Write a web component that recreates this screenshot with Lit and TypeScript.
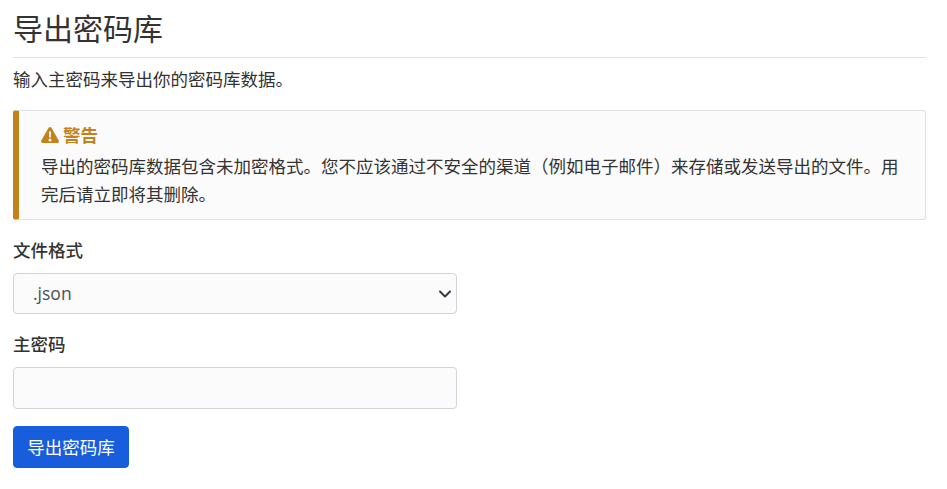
import { LitElement, html, css } from "lit";
import { customElement } from "lit/decorators.js";

@customElement("app-root")
export class AppRoot extends LitElement {
  static styles = css`
    :host {
      display: block;
      box-sizing: border-box;
      width: 926px;
      padding: 0 0 21px 13px;
      background: #fff;
      color: #333;
      font-family: "Open Sans", "Noto Sans CJK SC", sans-serif;
      font-size: 17.5px;
      line-height: 24px;
    }
    .head {
      height: 57px;
      border-bottom: 1px solid #dee2e6;
      display: flex;
      align-items: flex-end;
    }
    h1 {
      margin: 0 0 7px;
      font-size: 30px;
      font-weight: 400;
      line-height: 42px;
    }
    .intro {
      margin: 8px 0 17px;
      height: 27px;
      line-height: 27px;
    }
    .alert {
      box-sizing: border-box;
      height: 110px;
      margin-bottom: 18px;
      padding: 12px 22px 0 22px;
      border: 1px solid #dee2e6;
      border-left: 6px solid #c3821a;
      border-radius: 3px;
      background: #fbfbfb;
    }
    .alert-title {
      display: flex;
      align-items: center;
      gap: 4px;
      color: #c3821a;
      font-weight: 700;
      line-height: 24px;
    }
    .alert p {
      margin: 5px 0 0;
      line-height: 28px;
    }
    .warn { width: 18px; height: 16px; display: block; }
    label {
      display: block;
      font-weight: 500;
      line-height: 24px;
      margin-bottom: 11px;
    }
    .field { width: 444px; margin-bottom: 18px; }
    .field:last-of-type { margin-bottom: 17px; }
    .select {
      box-sizing: border-box;
      display: flex;
      align-items: center;
      justify-content: space-between;
      height: 41px;
      padding: 0 5px 2px 19px;
      border: 1px solid #ced4da;
      border-radius: 4px;
      background: #fbfbfb;
      color: #495057;
    }
    .chev { width: 12px; height: 8px; display: block; margin-top: 3px; }
    .input {
      box-sizing: border-box;
      display: block;
      width: 100%;
      height: 42px;
      border: 1px solid #ced4da;
      border-radius: 4px;
      background: #fbfbfb;
      padding: 0;
      outline: none;
    }
    button {
      box-sizing: border-box;
      display: block;
      height: 42px;
      width: 116px;
      padding: 0;
      border: 1px solid #175ddc;
      border-radius: 4px;
      background: #175ddc;
      color: #fff;
      font: inherit;
    }
  `;

  render() {
    return html`
      <div class="head"><h1>导出密码库</h1></div>
      <p class="intro">输入主密码来导出你的密码库数据。</p>
      <div class="alert">
        <div class="alert-title">
          <svg class="warn" viewBox="0 0 18 16" aria-hidden="true">
            <path fill="#c3821a" fill-rule="evenodd" d="M9 0c.6 0 1.1.3 1.4.8l7.3 12.6c.6 1.1-.2 2.6-1.4 2.6H1.7C.5 16-.3 14.5.3 13.4L7.6.8C7.9.3 8.4 0 9 0zM7.9 4.5l.3 6h1.6l.3-6H7.9zM9 11.4a1.5 1.5 0 1 0 0 3 1.5 1.5 0 0 0 0-3z"/>
          </svg>
          <span>警告</span>
        </div>
        <p>导出的密码库数据包含未加密格式。您不应该通过不安全的渠道（例如电子邮件）来存储或发送导出的文件。用完后请立即将其删除。</p>
      </div>
      <div class="field">
        <label>文件格式</label>
        <div class="select">
          <span>.json</span>
          <svg class="chev" viewBox="0 0 12 8" aria-hidden="true">
            <path d="M1 1.5l5 5 5-5" fill="none" stroke="#343a40" stroke-width="2" stroke-linecap="round" stroke-linejoin="round"/>
          </svg>
        </div>
      </div>
      <div class="field">
        <label>主密码</label>
        <input class="input" type="password" />
      </div>
      <button>导出密码库</button>
    `;
  }
}
